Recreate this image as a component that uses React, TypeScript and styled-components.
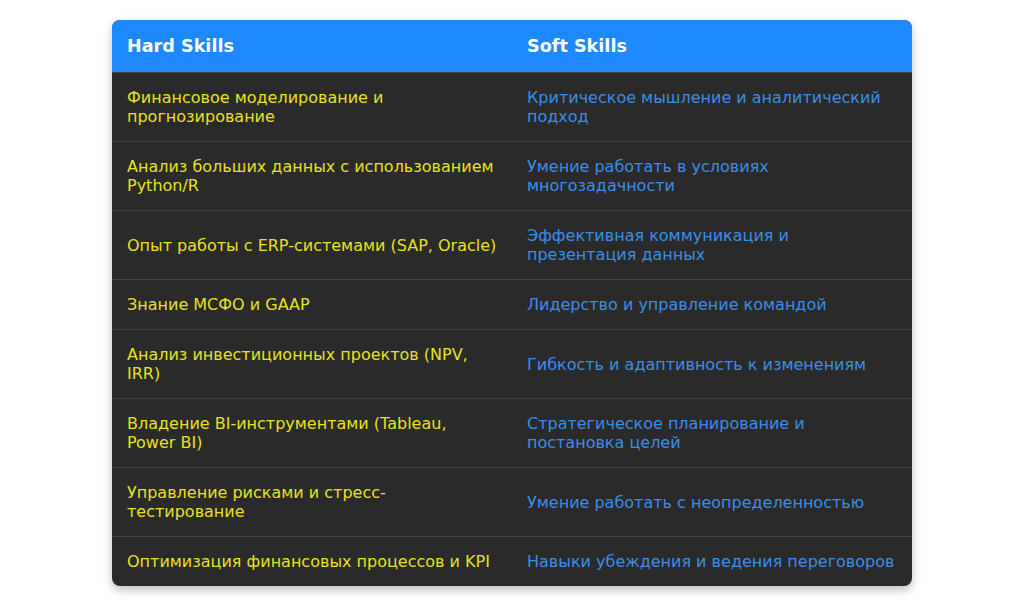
import styled, { createGlobalStyle } from "styled-components";

const GlobalStyle = createGlobalStyle`
  body {
    margin: 0;
    background: #ffffff;
    font-family: "DejaVu Sans", "Liberation Sans", sans-serif;
  }
`;

const rows: [string, string][] = [
  ["Финансовое моделирование и прогнозирование", "Критическое мышление и аналитический подход"],
  ["Анализ больших данных с использованием Python/R", "Умение работать в условиях многозадачности"],
  ["Опыт работы с ERP-системами (SAP, Oracle)", "Эффективная коммуникация и презентация данных"],
  ["Знание МСФО и GAAP", "Лидерство и управление командой"],
  ["Анализ инвестиционных проектов (NPV, IRR)", "Гибкость и адаптивность к изменениям"],
  ["Владение BI-инструментами (Tableau, Power BI)", "Стратегическое планирование и постановка целей"],
  ["Управление рисками и стресс-тестирование", "Умение работать с неопределенностью"],
  ["Оптимизация финансовых процессов и KPI", "Навыки убеждения и ведения переговоров"],
];

const Page = styled.div`
  display: flex;
  justify-content: center;
  padding: 20px 0;
`;

const Table = styled.table`
  width: 800px;
  border-collapse: collapse;
  table-layout: fixed;
  background: #2a2a2a;
  border-radius: 8px;
  overflow: hidden;
  box-shadow: 0 4px 10px rgba(0, 0, 0, 0.25);
`;

const HeadCell = styled.th`
  background: #1e88fe;
  color: #ffffff;
  text-align: left;
  font-size: 17.6px;
  font-weight: bold;
  line-height: 22px;
  padding: 15px;
`;

const Row = styled.tr`
  border-top: 1px solid #444444;
`;

const Cell = styled.td<{ $tone: "hard" | "soft" }>`
  color: ${(p) => (p.$tone === "hard" ? "#e8e020" : "#3a8ee8")};
  font-size: 16px;
  line-height: 19px;
  padding: 15px;
  vertical-align: middle;
`;

export default function App() {
  return (
    <>
      <GlobalStyle />
      <Page>
        <Table>
          <thead>
            <tr>
              <HeadCell>Hard Skills</HeadCell>
              <HeadCell>Soft Skills</HeadCell>
            </tr>
          </thead>
          <tbody>
            {rows.map(([hard, soft]) => (
              <Row key={hard}>
                <Cell $tone="hard">{hard}</Cell>
                <Cell $tone="soft">{soft}</Cell>
              </Row>
            ))}
          </tbody>
        </Table>
      </Page>
    </>
  );
}
